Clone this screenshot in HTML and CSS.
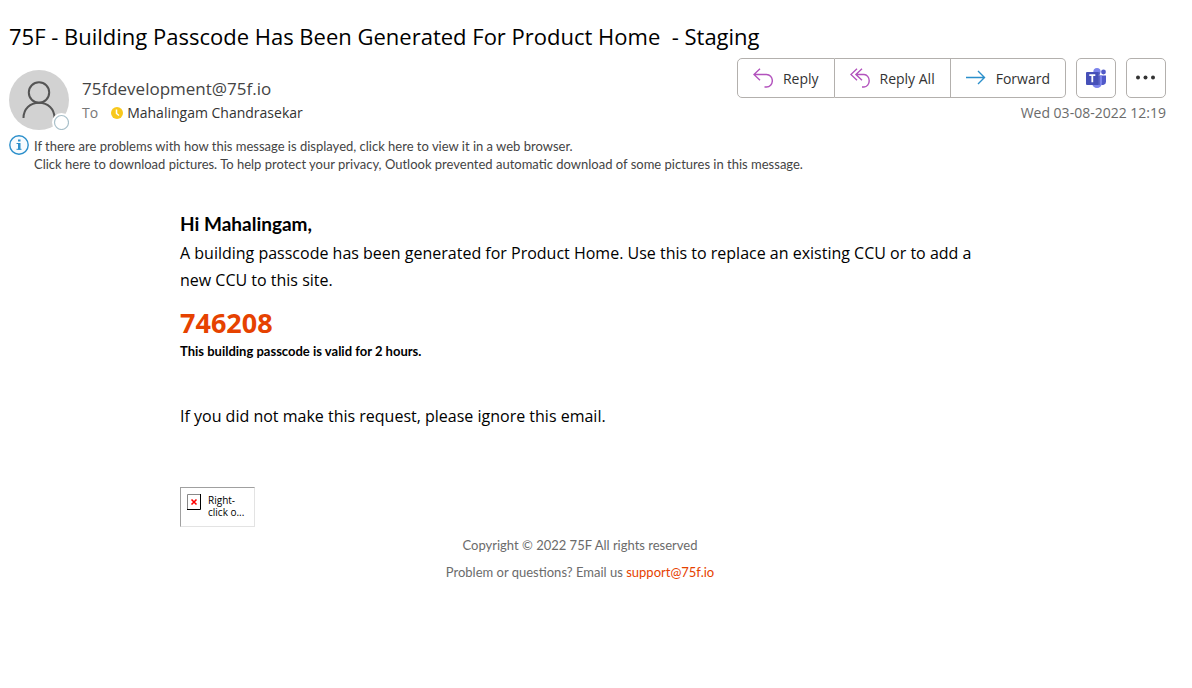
FILE: index.html
```
<!DOCTYPE html>
<html lang="en">
<head>
    <meta charset="UTF-8">
    <meta name="viewport" content="width=device-width, initial-scale=1.0">
    <title>75F - Building Passcode</title>
    <link rel="stylesheet" href="styles.css">
</head>
<body>
    <!-- Message header -->
    <header class="message-header">
        <h1 class="subject">75F - Building Passcode Has Been Generated For Product Home&nbsp; - Staging</h1>

        <div class="header-row">
            <div class="sender">
                <div class="avatar">
                    <svg width="60" height="60" viewBox="0 0 60 60" fill="none" aria-hidden="true">
                        <circle cx="30" cy="30" r="30" fill="#d2d2d2"/>
                        <circle cx="30" cy="22.5" r="10.2" stroke="#555" stroke-width="2"/>
                        <path d="M14.5 48c0-9 6.500-15.200 15.500-15.200S45.500 39 45.500 48" stroke="#555" stroke-width="2"/>
                        <circle cx="52.500" cy="52.500" r="9.500" fill="#fff"/>
                        <circle cx="52.500" cy="52.500" r="7" fill="#fff" stroke="#a9c0ca" stroke-width="1.200"/>
                    </svg>
                </div>
                <div class="sender-info">
                    <div class="from">75fdevelopment@75f.io</div>
                    <div class="to">
                        <span class="to-label">To</span>
                        <svg width="12" height="12" viewBox="0 0 12 12" aria-hidden="true">
                            <circle cx="6" cy="6" r="6" fill="#f8c81c"/>
                            <path d="M5.500 2.500v4l2.500 2" fill="none" stroke="#fff" stroke-width="1.500"/>
                        </svg>
                        <span>Mahalingam Chandrasekar</span>
                    </div>
                </div>
            </div>

            <div class="header-right">
                <div class="actions">
                    <div class="button-group">
                        <button class="button" type="button">
                            <svg width="20" height="20" viewBox="0 0 20 20" fill="none" stroke="#b252bd" stroke-width="1.400" aria-hidden="true">
                                <path d="M7 .7.900 6.500 7 12.300M1 6.500h12.500a5.600 6 0 0 1 0 12.500h-2"/>
                            </svg>
                            Reply
                        </button>
                        <button class="button" type="button">
                            <svg width="20" height="20" viewBox="0 0 20 20" fill="none" stroke="#b252bd" stroke-width="1.400" aria-hidden="true">
                                <path d="M7 .7.900 6.500 7 12.300M12 .7 5.900 6.500l6.100 5.800M6 6.500h8a5 6 0 0 1 0 12.500h-2"/>
                            </svg>
                            Reply All
                        </button>
                        <button class="button" type="button">
                            <svg width="20" height="20" viewBox="0 0 20 20" fill="none" stroke="#2b8fcb" stroke-width="1.400" aria-hidden="true">
                                <path d="M0 9.500h18.500M12 3l6.500 6.500L12 16"/>
                            </svg>
                            Forward
                        </button>
                    </div>
                    <button class="button icon-button" type="button" aria-label="Share to Teams">
                        <svg width="20" height="20" viewBox="0 0 20 20" aria-hidden="true">
                            <circle cx="17.500" cy="4" r="2.400" fill="#5059c9"/>
                            <path d="M14 7.500h6v6a3.500 3.500 0 0 1-6 2.500z" fill="#5059c9"/>
                            <circle cx="11" cy="3.600" r="3.600" fill="#7b83eb"/>
                            <path d="M6 7.500h10v7a5 5.500 0 0 1-10 0z" fill="#7b83eb"/>
                            <path d="M6 4h7a1 1 0 0 1 1 1v12H6z" fill="#3d469f" opacity=".5"/>
                            <rect y="4" width="12.500" height="13" rx="1" fill="#4650b8"/>
                            <path d="M3.300 7.200h6M6.300 7.200v7" stroke="#fff" stroke-width="1.800"/>
                        </svg>
                    </button>
                    <button class="button icon-button" type="button" aria-label="More actions">
                        <svg width="20" height="20" viewBox="0 0 20 20" fill="#333" aria-hidden="true">
                            <circle cx="2" cy="9.500" r="2"/>
                            <circle cx="9.500" cy="9.500" r="2"/>
                            <circle cx="17" cy="9.500" r="2"/>
                        </svg>
                    </button>
                </div>
                <time class="date" datetime="2022-08-03T12:19">Wed 03-08-2022 12:19</time>
            </div>
        </div>

        <!-- Info bar -->
        <div class="info-bar">
            <svg width="20" height="20" viewBox="0 0 20 20" aria-hidden="true">
                <circle cx="10" cy="10" r="9.200" fill="#f7fbfe" stroke="#2b8fcb" stroke-width="1.400"/>
                <path d="M7.500 8.500H10M7.500 14.300h5" fill="none" stroke="#2b8fcb" stroke-width="1"/>
                <path d="M9 8h2.500v6.500H9zM9 4.500h2.500v2H9z" fill="#2b8fcb"/>
            </svg>
            <div class="info-text">
                <div>If there are problems with how this message is displayed, click here to view it in a web browser.</div>
                <div>Click here to download pictures. To help protect your privacy, Outlook prevented automatic download of some pictures in this message.</div>
            </div>
        </div>
    </header>

    <!-- Message body -->
    <main class="message-body">
        <h2 class="greeting">Hi Mahalingam,</h2>
        <p class="text">A building passcode has been generated for Product Home. Use this to replace an existing CCU or to add a new CCU to this site.</p>
        <div class="passcode">746208</div>
        <p class="valid">This building passcode is valid for 2 hours.</p>
        <p class="text">If you did not make this request, please ignore this email.</p>

        <div class="blocked-image">
            <svg width="14" height="16" viewBox="0 0 14 16" aria-hidden="true">
                <path d="M.5 15.500V.5h13" fill="none" stroke="#888"/>
                <path d="M0 15.500h13.500V0" fill="none" stroke="#000"/>
                <path d="m4.500 5.500 5 5M9.500 5.500l-5 5" stroke="#f00" stroke-width="1.600"/>
            </svg>
            <span>Right-<br>click o...</span>
        </div>

        <footer class="message-footer">
            <div>Copyright © 2022 75F All rights reserved</div>
            <div>Problem or questions? Email us <a href="mailto:support@75f.io">support@75f.io</a></div>
        </footer>
    </main>
</body>
</html>
```
FILE: styles.css
```
/* Base */
* {
    box-sizing: border-box;
}
body {
    font-family: 'Open Sans', 'Noto Sans', sans-serif;
    margin: 0;
    background-color: #ffffff;
    color: #000000;
}
svg {
    display: block;
    flex-shrink: 0;
}

/* Message header */
.message-header {
    padding: 21px 26px 0 9px;
}
.subject {
    margin: 0;
    font-size: 22px;
    font-weight: 400;
    line-height: 30px;
}
.header-row {
    display: flex;
    justify-content: space-between;
    margin-top: 7px;
}
.sender {
    display: flex;
    gap: 13px;
    padding-top: 12px;
}
.sender-info {
    padding-top: 7px;
}
.from {
    font-size: 17px;
    line-height: 24px;
    color: #444444;
}
.to {
    display: flex;
    align-items: center;
    gap: 4px;
    font-size: 14px;
    line-height: 24px;
    color: #333333;
}
.to-label {
    margin-right: 9px;
    color: #777777;
}
.header-right {
    display: flex;
    flex-direction: column;
    align-items: flex-end;
}
.actions {
    display: flex;
    gap: 10px;
}
.button-group {
    display: flex;
}
.button {
    display: flex;
    align-items: center;
    gap: 10px;
    height: 40px;
    padding: 0 15px;
    border: 1px solid #b3b0ad;
    background-color: #ffffff;
    font-family: inherit;
    font-size: 14px;
    color: #333333;
    cursor: pointer;
}
.button:hover {
    background-color: #f3f2f1;
}
.button-group .button + .button {
    border-left: none;
}
.button-group .button:first-child {
    border-radius: 5px 0 0 5px;
}
.button-group .button:last-child {
    border-radius: 0 5px 5px 0;
}
.icon-button {
    justify-content: center;
    width: 40px;
    padding: 0;
    border-radius: 5px;
}
.date {
    margin-top: 3px;
    font-size: 14px;
    line-height: 24px;
    color: #6b6b6b;
}

/* Info bar */
.info-bar {
    display: flex;
    gap: 5px;
    margin-top: 5px;
    font-family: Lato, sans-serif;
    font-size: 13px;
    line-height: 18px;
    color: #444444;
}
.info-text {
    padding-top: 2px;
}

/* Message body */
.message-body {
    max-width: 832px;
    margin: 36px auto 0;
    padding-right: 32px;
}
.greeting {
    margin: 0;
    font-family: Lato, sans-serif;
    font-size: 19px;
    font-weight: 700;
    line-height: 30px;
}
.text {
    margin: 0;
    font-size: 16px;
    line-height: 27px;
}
.greeting + .text {
    padding-top: 1px;
}
.passcode {
    margin-top: 11px;
    font-size: 27px;
    font-weight: 700;
    line-height: 36px;
    color: #e64200;
}
.valid {
    margin: 0 0 42px;
    font-family: Lato, sans-serif;
    font-size: 13px;
    font-weight: 700;
    line-height: 20px;
}
.blocked-image {
    display: flex;
    gap: 7px;
    width: 75px;
    height: 40px;
    margin-top: 57px;
    padding: 6px;
    border: 1px solid #e3e3e3;
    border-top-color: #a0a0a0;
    border-left-color: #a0a0a0;
    font-family: 'Open Sans', sans-serif;
    font-size: 10px;
    line-height: 12px;
    white-space: nowrap;
}
.message-footer {
    margin-top: 5px;
    font-family: Lato, sans-serif;
    font-size: 13px;
    line-height: 27px;
    text-align: center;
    color: #6b6b6b;
}
.message-footer a {
    color: #e64200;
    text-decoration: none;
}
```
